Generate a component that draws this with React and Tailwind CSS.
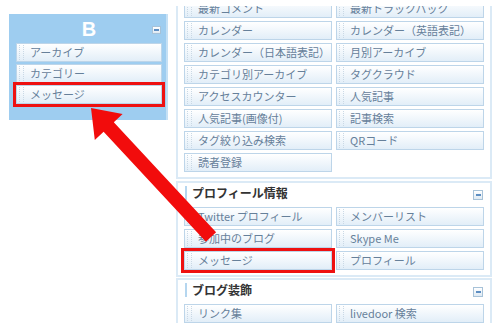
import React from 'react';

const font = { fontFamily: '"Noto Sans CJK JP", "Liberation Sans", sans-serif' };

function Minus({ size = 'w-[10px] h-[10px]' }) {
  return (
    <div className={`${size} border border-[#a7c2d8] bg-gradient-to-b from-white to-[#dfeaf3] flex items-center justify-center`}>
      <div className="w-[5px] h-[2px] bg-[#5d8ec2]" />
    </div>
  );
}

function Item({ label, marked }) {
  return (
    <div className={`h-[19px] border border-[#bdd5e9] bg-gradient-to-b from-white to-[#e2eef8] flex items-center ${marked ? 'outline-3 outline-[#ee1111]' : ''}`}>
      <div className="ml-[2px] w-[5px] h-[15px] border-x border-dotted border-[#c9d8e5]" />
      <span className="ml-[6px] text-[11px] leading-none text-[#66809a] whitespace-nowrap">{label}</span>
    </div>
  );
}

function Section({ title, items, className = '' }) {
  return (
    <div className={`border-2 border-[#dbeaf6] bg-white px-[6px] pb-[5px] ${className}`}>
      {title && (
        <div className="h-[16px] mt-[2px] mb-[6px] flex items-center">
          <div className="ml-[1px] w-[2px] h-[14px] bg-[#b5d6ef]" />
          <span className="ml-[5px] text-[12px] font-bold text-[#333] leading-none">{title}</span>
          <div className="ml-auto mr-[1px] mt-[4px]"><Minus /></div>
        </div>
      )}
      <div className="grid grid-cols-2 gap-x-[4px] gap-y-[3px]">
        {items.map((it, i) => (
          <Item key={i} label={it.label ?? it} marked={it.marked} />
        ))}
      </div>
    </div>
  );
}

const plugins = [
  '最新コメント', '最新トラックバック',
  'カレンダー', 'カレンダー（英語表記）',
  'カレンダー（日本語表記）', '月別アーカイブ',
  'カテゴリ別アーカイブ', 'タグクラウド',
  'アクセスカウンター', '人気記事',
  '人気記事(画像付)', '記事検索',
  'タグ絞り込み検索', 'QRコード',
  '読者登録',
];

const profile = [
  'Twitter プロフィール', 'メンバーリスト',
  '参加中のブログ', 'Skype Me',
  { label: 'メッセージ', marked: true }, 'プロフィール',
];

const deco = ['リンク集', 'livedoor 検索'];

export default function App() {
  return (
    <div className="relative w-[500px] h-[334px] bg-white overflow-hidden" style={font}>
      <div className="flex">
        <div className="w-[176px] pt-[14px] pl-[9px]">
          <div className="w-[159px] h-[106px] bg-[#9ecdf0] border-r-2 border-[#c4e0f5] pl-[7px] pr-[4px]">
            <div className="h-[29px] relative flex items-center justify-center">
              <span className="text-white font-bold text-[20px] leading-none" style={{ fontFamily: '"Liberation Sans", Arial, sans-serif' }}>B</span>
              <div className="absolute right-[1px] top-[12px]"><Minus size="w-[9px] h-[8px]" /></div>
            </div>
            <div className="flex flex-col gap-[2px]">
              <Item label="アーカイブ" />
              <Item label="カテゴリー" />
              <Item label="メッセージ" marked />
            </div>
          </div>
        </div>
        <div className="w-[316px] h-[317px] mt-[6px] overflow-hidden">
          <Section items={plugins} className="-mt-[15px] pt-[6px] mb-[2px]" />
          <Section title="プロフィール情報" items={profile} className="mb-[1px]" />
          <Section title="ブログ装飾" items={deco} />
        </div>
      </div>
      <svg className="absolute inset-0 pointer-events-none" width="500" height="334" viewBox="0 0 500 334">
        <polygon
          fill="#f20c0c"
          points="91,108 122.6,114.1 113.8,122.3 216.1,232.2 205.9,241.8 103.6,131.8 94.8,140"
        />
      </svg>
    </div>
  );
}
